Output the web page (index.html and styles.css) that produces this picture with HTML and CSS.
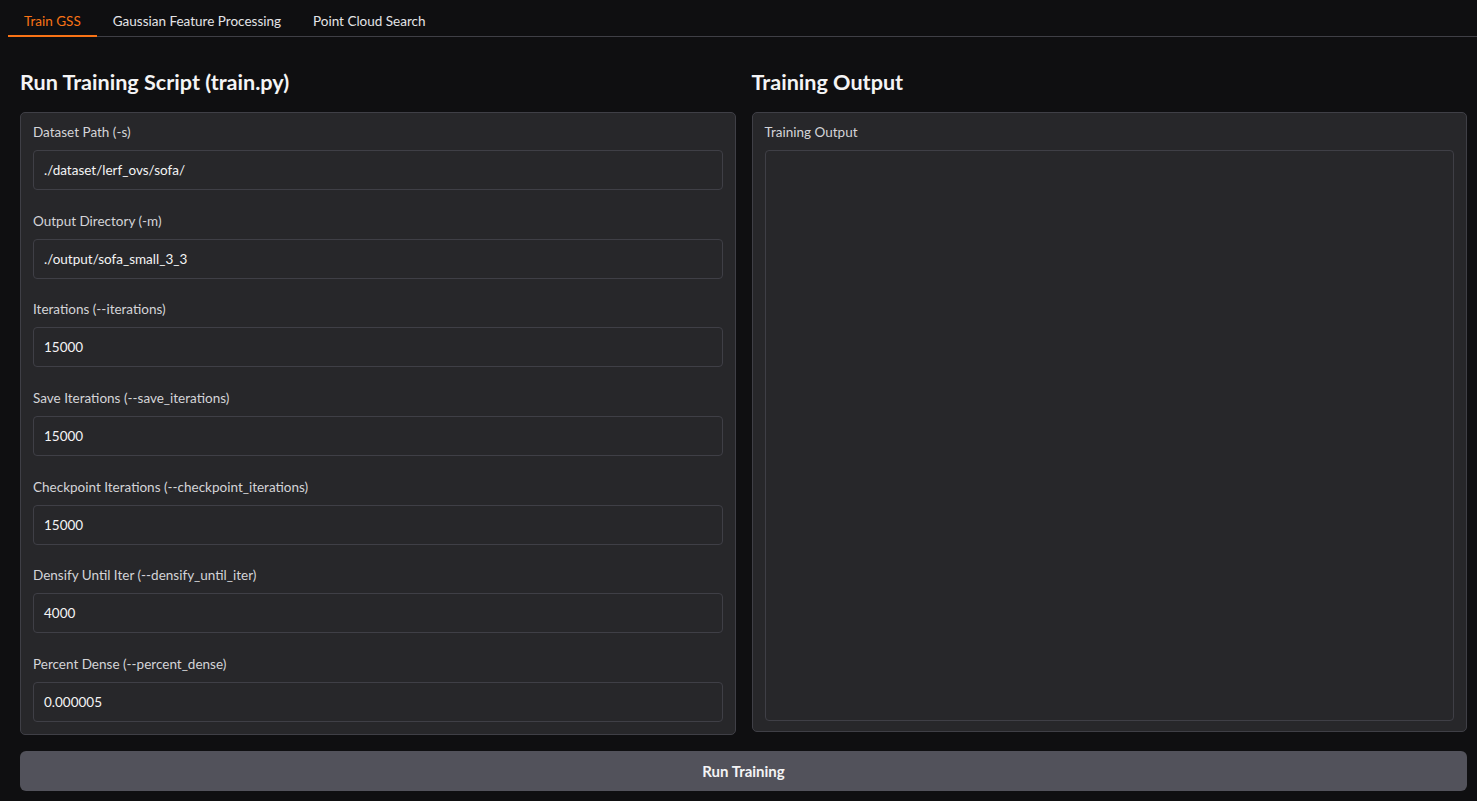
FILE: index.html
```html
<!DOCTYPE html>
<html>
<head>
<meta charset="utf-8">
<link rel="stylesheet" href="styles.css">
</head>
<body>
<div class="app">
  <div class="tabs">
    <button class="tab active">Train GSS</button>
    <button class="tab">Gaussian Feature Processing</button>
    <button class="tab">Point Cloud Search</button>
  </div>
  <div class="content">
    <div class="columns">
      <div class="col">
        <h2 class="title">Run Training Script (train.py)</h2>
        <div class="panel form">
          <div class="field"><label>Dataset Path (-s)</label><div class="input">./dataset/lerf_ovs/sofa/</div></div>
          <div class="field"><label>Output Directory (-m)</label><div class="input">./output/sofa_small_3_3</div></div>
          <div class="field"><label>Iterations (--iterations)</label><div class="input">15000</div></div>
          <div class="field"><label>Save Iterations (--save_iterations)</label><div class="input">15000</div></div>
          <div class="field"><label>Checkpoint Iterations (--checkpoint_iterations)</label><div class="input">15000</div></div>
          <div class="field"><label>Densify Until Iter (--densify_until_iter)</label><div class="input">4000</div></div>
          <div class="field"><label>Percent Dense (--percent_dense)</label><div class="input">0.000005</div></div>
        </div>
      </div>
      <div class="col">
        <h2 class="title">Training Output</h2>
        <div class="panel output">
          <label>Training Output</label>
          <div class="textarea"></div>
        </div>
      </div>
    </div>
    <button class="run">Run Training</button>
  </div>
</div>
</body>
</html>
```
FILE: styles.css
```css
* { box-sizing: border-box; }
html, body { margin: 0; padding: 0; background: #0f0f11; }
body {
  font-family: Lato, "Liberation Sans", sans-serif;
  color: #f4f4f5;
  width: 1477px;
  height: 801px;
  overflow: hidden;
}
.tabs {
  display: flex;
  margin-left: 8px;
  border-bottom: 1px solid #3f3f46;
  height: 37px;
}
.tab {
  background: none;
  border: none;
  font-family: inherit;
  font-size: 13.5px;
  color: #e4e4e7;
  padding: 9px 16px 2px;
  height: 37px;
  margin-bottom: -1px;
  border-bottom: 2px solid transparent;
  display: flex;
  align-items: center;
}
.tab.active { color: #f97316; border-bottom-color: #f97316; }
.content { padding: 0 10px 0 20px; }
.columns { display: flex; gap: 16px; align-items: flex-start; }
.col { flex: 1; display: flex; flex-direction: column; }
.title {
  font-size: 21.6px;
  font-weight: 700;
  margin: 0;
  height: 75px;
  line-height: 90px;
  color: #f4f4f5;
}
.panel {
  background: #27272a;
  border: 1px solid #3f3f46;
  border-radius: 5px;
  padding: 10px 12px 12px;
}
.form { display: flex; flex-direction: column; gap: 21.67px; }
.field { display: flex; flex-direction: column; }
label {
  font-size: 13.5px;
  line-height: 19px;
  color: #d4d4d8;
  margin-bottom: 8px;
}
.input {
  height: 40px;
  border: 1px solid #3f3f46;
  border-radius: 4px;
  background: #27272a;
  padding: 0 10px;
  display: flex;
  align-items: center;
  font-size: 13.5px;
  color: #f4f4f5;
}
.output { height: 620px; display: flex; flex-direction: column; padding-bottom: 10px; }
.textarea {
  flex: 1;
  border: 1px solid #3f3f46;
  border-radius: 4px;
  background: #27272a;
}
.run {
  margin-top: 16px;
  width: 100%;
  height: 40px;
  background: #52525b;
  border: none;
  border-radius: 6px;
  color: #f4f4f5;
  font-family: inherit;
  font-weight: 700;
  font-size: 15px;
}
```
